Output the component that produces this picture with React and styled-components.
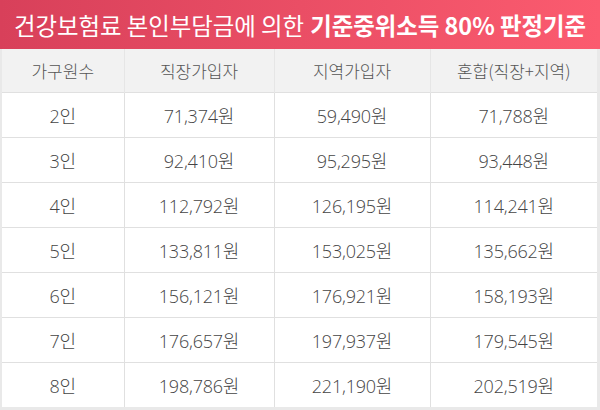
import React from "react";
import styled, { createGlobalStyle } from "styled-components";

const rows = [
  ["2인", "71,374원", "59,490원", "71,788원"],
  ["3인", "92,410원", "95,295원", "93,448원"],
  ["4인", "112,792원", "126,195원", "114,241원"],
  ["5인", "133,811원", "153,025원", "135,662원"],
  ["6인", "156,121원", "176,921원", "158,193원"],
  ["7인", "176,657원", "197,937원", "179,545원"],
  ["8인", "198,786원", "221,190원", "202,519원"],
];

const heads = ["가구원수", "직장가입자", "지역가입자", "혼합(직장+지역)"];
const widths = [122, 150, 156, 167];

function App() {
  return (
    <>
      <GlobalStyle />
      <Frame>
        <Title>
          건강보험료 본인부담금에 의한 <strong>기준중위소득 80% 판정기준</strong>
        </Title>
        <Table>
          <colgroup>
            {widths.map((w, i) => (
              <col key={i} style={{ width: w }} />
            ))}
          </colgroup>
          <thead>
            <tr>
              {heads.map((h) => (
                <Th key={h}>{h}</Th>
              ))}
            </tr>
          </thead>
          <tbody>
            {rows.map((r) => (
              <tr key={r[0]}>
                {r.map((c, i) => (
                  <Td key={i}>{c}</Td>
                ))}
              </tr>
            ))}
          </tbody>
        </Table>
      </Frame>
    </>
  );
}

const GlobalStyle = createGlobalStyle`
  body {
    margin: 0;
    background: #fff;
    font-family: "Noto Sans CJK KR", sans-serif;
  }
`;

const Frame = styled.div`
  width: 600px;
  height: 410px;
  background: #e9e9e9;
  overflow: hidden;
`;

const Title = styled.div`
  height: 49px;
  display: flex;
  align-items: center;
  justify-content: center;
  background: linear-gradient(90deg, #d8405a 0%, #ea4e65 50%, #fb5b6f 100%);
  color: #fff;
  font-family: "Noto Sans CJK KR", sans-serif;
  font-size: 23.4px;
  font-weight: 400;
  white-space: nowrap;

  strong {
    font-weight: 700;
    margin-left: 6px;
  }
`;

const Table = styled.table`
  border-collapse: collapse;
  table-layout: fixed;
  width: 595px;
  margin-left: 2px;
  background: #fff;
`;

const Th = styled.th`
  height: 43px;
  padding: 0;
  background: #f2f2f2;
  color: #555;
  font-family: "Noto Sans CJK KR", sans-serif;
  font-size: 17px;
  font-weight: 300;
  border-left: 1px solid #e6e6e6;
  &:first-child {
    border-left: none;
  }
`;

const Td = styled.td`
  height: 44px;
  padding: 0;
  text-align: center;
  color: #444;
  font-family: "Open Sans", "Noto Sans CJK KR", sans-serif;
  font-size: 18px;
  font-weight: 300;
  letter-spacing: -0.2px;
  border-top: 1px solid #e0e0e0;
  border-left: 1px solid #e0e0e0;
  &:first-child {
    border-left: none;
  }
`;

export default App;
